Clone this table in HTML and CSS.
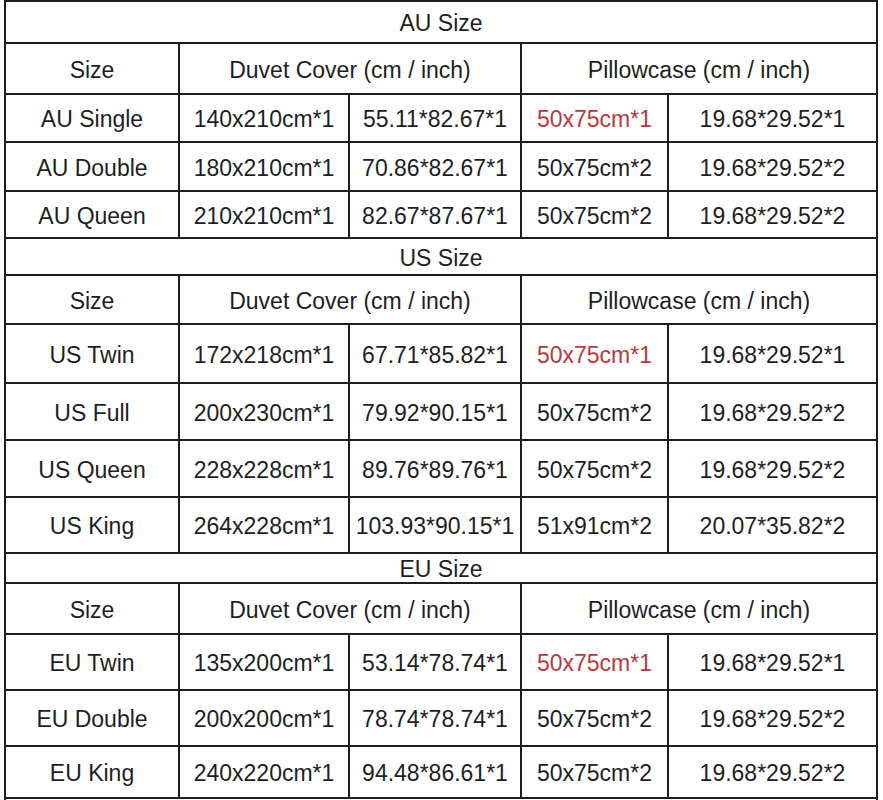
FILE: index.html
```html
<!DOCTYPE html>
<html lang="en">
<head>
<meta charset="utf-8">
<title>Size Chart</title>
<link rel="stylesheet" href="styles.css">
</head>
<body>
<div class="sheet">
  <div class="cell title">AU Size</div>
  <div class="cell">Size</div><div class="cell span2">Duvet Cover (cm / inch)</div><div class="cell span2">Pillowcase (cm / inch)</div>
  <div class="cell">AU Single</div><div class="cell">140x210cm*1</div><div class="cell">55.11*82.67*1</div><div class="cell red">50x75cm*1</div><div class="cell">19.68*29.52*1</div>
  <div class="cell">AU Double</div><div class="cell">180x210cm*1</div><div class="cell">70.86*82.67*1</div><div class="cell">50x75cm*2</div><div class="cell">19.68*29.52*2</div>
  <div class="cell">AU Queen</div><div class="cell">210x210cm*1</div><div class="cell">82.67*87.67*1</div><div class="cell">50x75cm*2</div><div class="cell">19.68*29.52*2</div>

  <div class="cell title">US Size</div>
  <div class="cell">Size</div><div class="cell span2">Duvet Cover (cm / inch)</div><div class="cell span2">Pillowcase (cm / inch)</div>
  <div class="cell">US Twin</div><div class="cell">172x218cm*1</div><div class="cell">67.71*85.82*1</div><div class="cell red">50x75cm*1</div><div class="cell">19.68*29.52*1</div>
  <div class="cell">US Full</div><div class="cell">200x230cm*1</div><div class="cell">79.92*90.15*1</div><div class="cell">50x75cm*2</div><div class="cell">19.68*29.52*2</div>
  <div class="cell">US Queen</div><div class="cell">228x228cm*1</div><div class="cell">89.76*89.76*1</div><div class="cell">50x75cm*2</div><div class="cell">19.68*29.52*2</div>
  <div class="cell">US King</div><div class="cell">264x228cm*1</div><div class="cell">103.93*90.15*1</div><div class="cell">51x91cm*2</div><div class="cell">20.07*35.82*2</div>

  <div class="cell title">EU Size</div>
  <div class="cell">Size</div><div class="cell span2">Duvet Cover (cm / inch)</div><div class="cell span2">Pillowcase (cm / inch)</div>
  <div class="cell">EU Twin</div><div class="cell">135x200cm*1</div><div class="cell">53.14*78.74*1</div><div class="cell red">50x75cm*1</div><div class="cell">19.68*29.52*1</div>
  <div class="cell">EU Double</div><div class="cell">200x200cm*1</div><div class="cell">78.74*78.74*1</div><div class="cell">50x75cm*2</div><div class="cell">19.68*29.52*2</div>
  <div class="cell">EU King</div><div class="cell">240x220cm*1</div><div class="cell">94.48*86.61*1</div><div class="cell">50x75cm*2</div><div class="cell">19.68*29.52*2</div>
  <div class="cell title"></div>
</div>
</body>
</html>
```
FILE: styles.css
```css
html, body {
  margin: 0;
  padding: 0;
  background: #ffffff;
}

body {
  font-family: "Liberation Sans", Arial, sans-serif;
  color: #1e1e1e;
}

.sheet {
  display: grid;
  grid-template-columns: 174px 170px 172px 147px 209px;
  grid-template-rows: 42px 51px 48px 49px 47px 37px 49px 59px 57px 57px 56px 30px 51px 56px 56px 52px 50px;
  width: max-content;
  margin-left: 4px;
  border-left: 2px solid #1e1e1e;
  border-top: 2px solid #1e1e1e;
}

.cell {
  box-sizing: border-box;
  display: flex;
  align-items: center;
  justify-content: center;
  padding-top: 3px;
  border-right: 2px solid #1e1e1e;
  border-bottom: 2px solid #1e1e1e;
  font-size: 23px;
  line-height: 1;
  white-space: nowrap;
  overflow: hidden;
}

.title {
  grid-column: 1 / -1;
}

.span2 {
  grid-column: span 2;
}

.red {
  color: #b8393c;
}
```
